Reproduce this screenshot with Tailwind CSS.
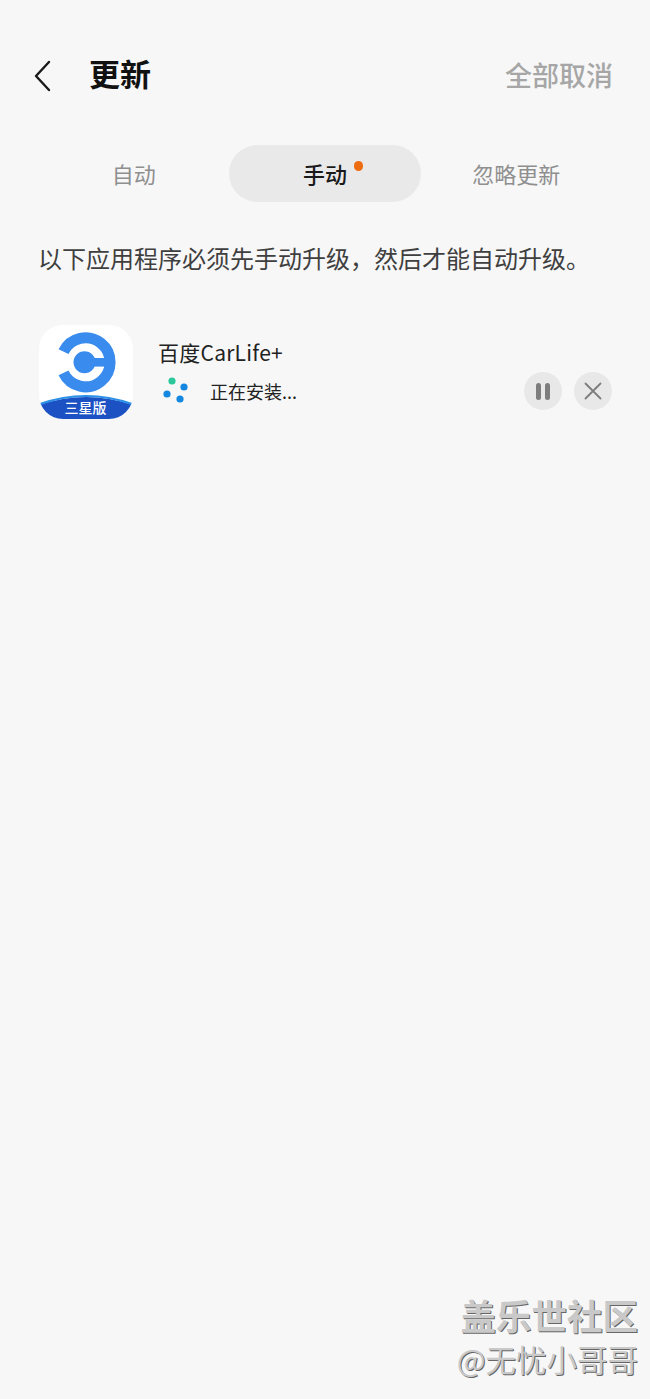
<!doctype html>
<html lang="zh-CN">
<head>
<meta charset="utf-8">
<script src="https://cdn.jsdelivr.net/npm/@tailwindcss/browser@4"></script>
</head>
<body class="m-0">
<div class="relative w-[650px] h-[1399px] overflow-hidden bg-[#f7f7f7] font-['Noto_Sans_CJK_SC','Noto_Sans',sans-serif]">
  <header class="flex items-center pt-[54px] pl-[33px] pr-[37px] h-[97px]">
    <svg class="w-[20px] h-[32px] shrink-0" viewBox="0 0 20 32" fill="none" stroke="#1a1a1a" stroke-width="2.4" stroke-linecap="round" stroke-linejoin="round"><path d="M16 2 3 16l13 14"/></svg>
    <h1 class="ml-[36px] -translate-y-[3px] text-[31px] leading-[42px] font-bold text-[#111]">更新</h1>
    <span class="ml-auto -translate-y-[1px] text-[27px] leading-[42px] font-medium text-[#a6a6a6]">全部取消</span>
  </header>
  <nav class="grid grid-cols-3 ml-[38px] mr-[38px] mt-[48px] h-[57px] text-[22px]">
    <div class="flex items-center justify-center text-[#8f8f8f]">自动</div>
    <div class="relative flex items-center justify-center rounded-full bg-[#e9e9e9] font-medium text-[#1a1a1a]">手动<span class="absolute left-[125px] top-[16px] w-[9px] h-[10px] rounded-full bg-[#ee6c10]"></span></div>
    <div class="flex items-center justify-center text-[#8f8f8f]">忽略更新</div>
  </nav>
  <p class="ml-[38px] mt-[38px] text-[24px] leading-[36px] text-[#3f3f3f]">以下应用程序必须先手动升级，然后才能自动升级。</p>
  <section class="flex items-start mt-[49px] pl-[39px] pr-[38px]">
    <svg class="w-[94px] h-[94px] shrink-0" viewBox="0 0 94 94">
      <defs><clipPath id="ic"><rect width="94" height="94" rx="24"/></clipPath></defs>
      <g clip-path="url(#ic)">
        <rect width="94" height="94" fill="#fff"/>
        <path d="M24.5 26.7A24.5 24.5 0 1 1 24.5 47.9" fill="none" stroke="#3a8bee" stroke-width="11"/>
        <circle cx="45.5" cy="37.3" r="11" fill="#3a8bee"/>
        <rect x="46" y="33" width="24" height="8.6" fill="#3a8bee"/>
        <path d="M0 80Q47 64 94 80V94H0Z" fill="#1c51c4"/>
        <path d="M1 79Q47 63 93 79" fill="none" stroke="#2d8fe6" stroke-width="2"/>
        <text x="46.5" y="88" text-anchor="middle" font-size="14" font-weight="500" fill="#fff">三星版</text>
      </g>
    </svg>
    <div class="ml-[25px] flex-1 min-w-0 pt-[12px]">
      <div class="text-[21px] leading-[30px] tracking-[0.25px] text-[#222]">百度CarLife+</div>
      <div class="flex items-center h-[38px] mt-[5px]">
        <svg class="w-[28px] h-[28px] ml-[4px] shrink-0" viewBox="0 0 28 28"><circle cx="10" cy="4" r="3.6" fill="#2cc79a"/><circle cx="22" cy="10" r="3.6" fill="#1488e0"/><circle cx="5" cy="17" r="3.6" fill="#1488e0"/><circle cx="18" cy="22" r="3.6" fill="#1488e0"/></svg>
        <span class="ml-[20px] text-[18px] leading-[26px] text-[#222]">正在安装...</span>
        <button class="ml-auto flex items-center justify-center w-[38px] h-[38px] rounded-full bg-[#e8e8e8] gap-[4px]"><span class="w-[5px] h-[17px] rounded-full bg-[#7d7d7d]"></span><span class="w-[5px] h-[17px] rounded-full bg-[#7d7d7d]"></span></button>
        <button class="ml-[12px] flex items-center justify-center w-[38px] h-[38px] rounded-full bg-[#e8e8e8]"><svg class="w-[18px] h-[18px]" viewBox="0 0 18 18" fill="none" stroke="#7d7d7d" stroke-width="1.8" stroke-linecap="round"><path d="M1.5 1.5l15 15M16.5 1.5l-15 15"/></svg></button>
      </div>
    </div>
  </section>
  <div class="absolute right-[12px] top-[1292px] flex flex-col items-end">
    <span class="text-[35.5px] leading-[46px] font-bold text-[#c9c9c9] [text-shadow:1px_1px_0_#666]">盖乐世社区</span>
    <span class="text-[30.5px] leading-[42px] text-[#c9c9c9] [text-shadow:1px_1px_0_#666]">@无忧小哥哥</span>
  </div>
</div>
</body>
</html>
